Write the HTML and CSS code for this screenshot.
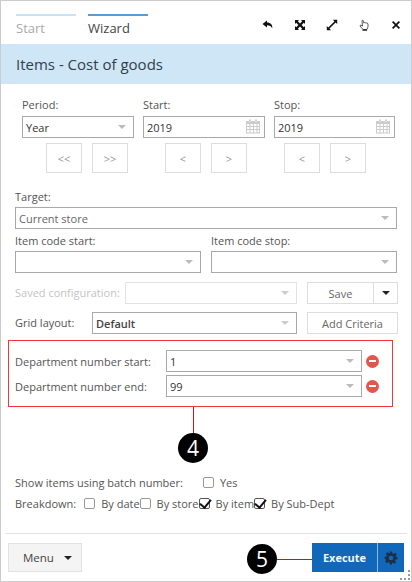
FILE: index.html
```html
<!DOCTYPE html>
<html lang="en">

<head>
    <meta charset="UTF-8">
    <meta name="viewport" content="width=device-width, initial-scale=1.0">
    <title>Items - Cost of goods</title>
    <link rel="stylesheet" href="styles.css">
</head>

<body>
    <div class="window">
        <div class="topbar">
            <div class="tab tab-off">Start</div>
            <div class="tab tab-on">Wizard</div>
            <div class="tools">
                <svg viewBox="0 0 12 12"><path d="M5 1.5 0.5 5 5 8.5V6.2c2.6 0 4.3.7 5.2 3.3.6-3.6-1.4-6-5.2-6z"/></svg>
                <svg viewBox="0 0 12 12"><path d="M1 1h4L3.8 2.2 6 4.4 8.200 2.2 7 1h4v4L9.800 3.800 7.600 6l2.200 2.200L11 7v4H7l1.200-1.200L6 7.600 3.800 9.800 5 11H1V7l1.200 1.200L4.400 6 2.200 3.800 1 5z"/></svg>
                <svg viewBox="0 0 12 12"><path d="M7 .8h4.200V5L9.600 3.500 3.500 9.600 5 11.200H.8V7l1.500 1.500 6.100-6.100z"/></svg>
                <svg viewBox="0 0 12 12"><path class="hand" d="M4 1.500c.8-.6 1.500 0 1.500.8L5.800 4l1-.5 1 .5 1-.2 1.200 1v3L9 10.500H5L2 7l.5-1 2 1z"/><path d="M4.500 10.500h4.500v1.200H4.500z"/></svg>
                <svg viewBox="0 0 12 12"><path d="M3.200 2 6 4.800 8.800 2 10 3.200 7.200 6 10 8.800 8.800 10 6 7.200 3.200 10 2 8.800 4.800 6 2 3.200z"/></svg>
            </div>
        </div>

        <h1 class="title">Items - Cost of goods</h1>

        <div class="period-row">
            <div class="period-col col-period">
                <label>Period:</label>
                <div class="field">Year<span class="arrow"></span></div>
                <div class="steps"><button>&lt;&lt;</button><button>&gt;&gt;</button></div>
            </div>
            <div class="period-col col-start">
                <label>Start:</label>
                <div class="field">2019
                    <svg class="cal" viewBox="0 0 14 14"><path d="M3 0h2v2H3zM9 0h2v2H9zM0 1.500h14V14H0zM1 4.500v2h2.500v-2zM4.500 4.500v2H7v-2zM8 4.500v2h2.500v-2zM11.500 4.500v2H13v-2zM1 7.500v2h2.500v-2zM4.500 7.500v2H7v-2zM8 7.500v2h2.500v-2zM11.500 7.500v2H13v-2zM1 10.500V13h2.500v-2.500zM4.500 10.500V13H7v-2.500zM8 10.500V13h2.500v-2.500zM11.500 10.500V13H13v-2.500z" fill-rule="evenodd"/></svg>
                </div>
                <div class="steps"><button>&lt;</button><button>&gt;</button></div>
            </div>
            <div class="period-col col-stop">
                <label>Stop:</label>
                <div class="field">2019
                    <svg class="cal" viewBox="0 0 14 14"><path d="M3 0h2v2H3zM9 0h2v2H9zM0 1.500h14V14H0zM1 4.500v2h2.500v-2zM4.500 4.500v2H7v-2zM8 4.500v2h2.500v-2zM11.500 4.500v2H13v-2zM1 7.500v2h2.500v-2zM4.500 7.500v2H7v-2zM8 7.500v2h2.500v-2zM11.500 7.500v2H13v-2zM1 10.500V13h2.500v-2.500zM4.500 10.500V13H7v-2.500zM8 10.500V13h2.500v-2.500zM11.500 10.500V13H13v-2.500z" fill-rule="evenodd"/></svg>
                </div>
                <div class="steps"><button>&lt;</button><button>&gt;</button></div>
            </div>
        </div>

        <div class="target">
            <label>Target:</label>
            <div class="field field-muted">Current store<span class="arrow"></span></div>
            <div class="code-row">
                <div>
                    <label>Item code start:</label>
                    <div class="field"><span class="arrow"></span></div>
                </div>
                <div>
                    <label>Item code stop:</label>
                    <div class="field"><span class="arrow"></span></div>
                </div>
            </div>
        </div>

        <div class="config-row disabled-row">
            <label class="label-off">Saved configuration:</label>
            <div class="field field-off"><span class="arrow arrow-off"></span></div>
            <div class="save-btn"><span class="save-text">Save</span><span class="save-caret"><span class="caret"></span></span></div>
        </div>
        <div class="config-row grid-row">
            <label>Grid layout:</label>
            <div class="field field-strong">Default<span class="arrow arrow-off"></span></div>
            <div class="add-btn">Add Criteria</div>
        </div>

        <div class="criteria">
            <div class="criteria-row">
                <label>Department number start:</label>
                <div class="field">1<span class="arrow"></span></div>
                <span class="minus"></span>
            </div>
            <div class="criteria-row">
                <label>Department number end:</label>
                <div class="field">99<span class="arrow"></span></div>
                <span class="minus"></span>
            </div>
        </div>

        <div class="options">
            <div class="opt-row">
                <span class="opt-label batch-label">Show items using batch number:</span>
                <span class="check"></span><span class="opt-text">Yes</span>
            </div>
            <div class="opt-row">
                <span class="opt-label">Breakdown:</span>
                <span class="check"></span><span class="opt-text">By date</span>
                <span class="check"></span><span class="opt-text">By store</span>
                <span class="check on"></span><span class="opt-text">By item</span>
                <span class="check on"></span><span class="opt-text">By Sub-Dept</span>
            </div>
        </div>

        <div class="footer">
            <div class="menu-btn">Menu<span class="caret"></span></div>
            <div class="exec-btn">
                <span class="exec-text">Execute</span>
                <span class="exec-gear">
                    <svg viewBox="0 0 24 24"><path fill-rule="evenodd" d="M10 1h4l.6 3.200 1.900.8 2.700-1.800 2.800 2.800-1.800 2.700.8 1.900L23 10v4l-3.200.6-.8 1.900 1.800 2.700-2.800 2.800-2.700-1.800-1.900.8L13.900 23h-4l-.6-3.200-1.900-.8-2.700 1.800-2.800-2.800 1.800-2.700-.8-1.900L1 14v-4l3.200-.6.8-1.900-1.800-2.700 2.800-2.800 2.700 1.800 1.900-.8zM12 8a4 4 0 1 0 0 8 4 4 0 0 0 0-8z"/></svg>
                </span>
            </div>
        </div>

        <!-- callouts over the form -->
        <div class="callout-line line-four"></div>
        <div class="callout callout-four">4</div>
        <div class="callout-line line-five"></div>
        <div class="callout callout-five">5</div>
        <div class="grip"><i></i><i></i><i></i><i></i><i></i></div>
    </div>
</body>

</html>
```

FILE: styles.css
```css
* {
    box-sizing: border-box;
}

body {
    margin: 0;
    background: #fff;
    font-family: "Open Sans", "Liberation Sans", sans-serif;
    font-size: 11px;
    color: #555;
}

label {
    display: block;
    line-height: 13px;
}

.window {
    position: relative;
    width: 412px;
    height: 582px;
    border: 1px solid #ccc;
    overflow: hidden;
}

/* tabs and window tools */
.topbar {
    display: flex;
    height: 43px;
    padding: 13px 0 0 15px;
}

.tab {
    width: 60px;
    margin-right: 12px;
    padding-top: 3px;
    font-size: 13px;
    line-height: 18px;
}

.tab-off {
    border-top: 2px solid #c6e3f8;
    color: #aaa;
}

.tab-on {
    border-top: 2px solid #5b9bd5;
    color: #444;
}

.tools {
    display: flex;
    gap: 20px;
    margin-left: auto;
    padding: 5px 9px 0 0;
}

.tools svg {
    width: 12px;
    height: 12px;
    fill: #111;
}

.tools .hand {
    fill: #fff;
    stroke: #333;
    stroke-width: 0.8;
}

.title {
    margin: 0;
    height: 40px;
    padding-left: 15px;
    background: #cfe6f7;
    font-size: 15px;
    font-weight: 500;
    line-height: 40px;
    color: #2f3f4a;
}

/* shared select look */
.field {
    position: relative;
    display: flex;
    align-items: center;
    height: 22px;
    padding-left: 3px;
    border: 1px solid #a9a9a9;
    background: #fff;
    font-size: 11px;
    color: #333;
}

.arrow {
    position: absolute;
    right: 7px;
    top: 8px;
    border-top: 4px solid #bbb;
    border-left: 4.5px solid transparent;
    border-right: 4.5px solid transparent;
}

.arrow-off {
    border-top-color: #ccc;
}

.cal {
    position: absolute;
    right: 4px;
    top: 2px;
    width: 14px;
    height: 15px;
    fill: #ccc;
}

/* period block */
.period-row {
    display: flex;
    padding: 14px 0 0 21px;
}

.period-col label {
    height: 18px;
}

.col-period {
    width: 112px;
    margin-right: 9px;
}

.col-start {
    width: 122px;
    margin-right: 9px;
}

.col-stop {
    width: 121px;
}

.steps {
    display: flex;
    gap: 10px;
    margin-top: 5px;
}

.col-period .steps {
    padding-left: 24px;
}

.col-start .steps {
    padding-left: 22px;
}

.col-stop .steps {
    padding-left: 10px;
}

.steps button {
    width: 36px;
    height: 30px;
    padding: 0;
    border: 1px solid #ddd;
    background: #fff;
    font-family: inherit;
    font-size: 11px;
    color: #999;
}

/* target and item code */
.target {
    padding: 17px 14px 0;
}

.target label {
    height: 17px;
}

.field-muted {
    color: #666;
}

.code-row {
    display: grid;
    grid-template-columns: 186px 186px;
    gap: 10px;
    margin-top: 5px;
}

/* saved config and grid layout */
.config-row {
    display: flex;
    align-items: center;
    height: 22px;
    padding-left: 14px;
}

.config-row label {
    margin-bottom: 2px;
}

.disabled-row {
    margin-top: 9px;
}

.grid-row {
    margin-top: 8px;
}

.label-off {
    width: 110px;
    color: #c4c4c4;
}

.disabled-row .field {
    width: 172px;
}

.field-off {
    border-color: #e2e2e2;
}

.grid-row label {
    width: 77px;
}

.field-strong {
    width: 205px;
    font-weight: 600;
    color: #444;
}

.save-btn,
.add-btn {
    display: flex;
    align-items: center;
    justify-content: center;
    width: 91px;
    height: 22px;
    margin-left: 10px;
    border: 1px solid #ddd;
    background: #fff;
    color: #666;
}

.save-btn {
    justify-content: flex-start;
}

.save-text {
    flex: 1;
    text-align: center;
}

.save-caret {
    display: flex;
    align-items: center;
    justify-content: center;
    width: 24px;
    height: 100%;
    border-left: 1px solid #ddd;
}

.caret {
    display: inline-block;
    border-top: 4px solid #222;
    border-left: 4px solid transparent;
    border-right: 4px solid transparent;
}

/* red highlighted criteria */
.criteria {
    display: flex;
    flex-direction: column;
    gap: 3px;
    width: 385px;
    height: 67px;
    margin: 6px 0 0 7px;
    padding: 9px 0 0 6px;
    border: 1px solid #f0353b;
}

.criteria-row {
    display: flex;
    align-items: center;
    height: 22px;
}

.criteria-row label {
    width: 151px;
}

.criteria-row .field {
    width: 196px;
}

.minus {
    position: relative;
    width: 13px;
    height: 13px;
    margin-left: 4px;
    border-radius: 50%;
    background: #e2574c;
}

.minus::after {
    content: "";
    position: absolute;
    left: 3px;
    top: 5px;
    width: 7px;
    height: 2px;
    background: #fff;
}

/* checkboxes */
.options {
    padding: 65px 0 0 14px;
}

.opt-row {
    display: flex;
    align-items: center;
    height: 21px;
}

.opt-label {
    margin-right: 8px;
}

.batch-label {
    margin-right: 20px;
}

.check {
    position: relative;
    flex: none;
    width: 11px;
    height: 11px;
    margin-right: 6px;
    border: 1px solid #999;
    border-radius: 2px;
    background: #fff;
}

.check.on {
    border-color: #555;
}

.check.on::after {
    content: "";
    position: absolute;
    left: 2px;
    top: -2px;
    width: 5px;
    height: 9px;
    border-right: 2px solid #111;
    border-bottom: 2px solid #111;
    transform: rotate(40deg);
}

/* footer */
.footer {
    display: flex;
    justify-content: space-between;
    height: 38px;
    margin: 19px 4px 0;
    padding: 9px 3px 0;
    border-top: 1px solid #e3e3e3;
}

.menu-btn {
    display: flex;
    align-items: center;
    gap: 10px;
    width: 74px;
    height: 29px;
    padding-left: 14px;
    border: 1px solid #e2e2e2;
    background: #f4f4f4;
    font-size: 11.5px;
    color: #444;
}

.exec-btn {
    display: flex;
    width: 92px;
    height: 29px;
    background: #1168bb;
    font-weight: 700;
    color: #f0f6fc;
}

.exec-text {
    width: 65px;
    font-size: 11px;
    line-height: 29px;
    text-align: center;
}

.exec-gear {
    display: flex;
    flex: 1;
    align-items: center;
    justify-content: center;
    border-left: 1px solid #8db8e0;
}

.exec-gear svg {
    width: 14px;
    height: 14px;
    fill: #1d2f42;
}

/* numbered callouts */
.callout {
    position: absolute;
    width: 30px;
    height: 30px;
    border-radius: 50%;
    background: #000;
    color: #fff;
    font-size: 21px;
    line-height: 30px;
    text-align: center;
}

.callout-four {
    left: 177px;
    top: 432px;
}

.callout-five {
    left: 246px;
    top: 543px;
}

.callout-line {
    position: absolute;
    background: #c8141c;
}

.line-four {
    left: 192px;
    top: 406px;
    width: 1px;
    height: 28px;
}

.line-five {
    left: 276px;
    top: 558px;
    width: 35px;
    height: 1px;
}

.grip {
    position: absolute;
    right: 1px;
    bottom: 1px;
    display: grid;
    grid-template-columns: repeat(3, 2px);
    gap: 2px;
}

.grip i {
    width: 2px;
    height: 2px;
    background: #999;
}

.grip i:nth-child(1),
.grip i:nth-child(2) {
    grid-column: 3;
}
```
